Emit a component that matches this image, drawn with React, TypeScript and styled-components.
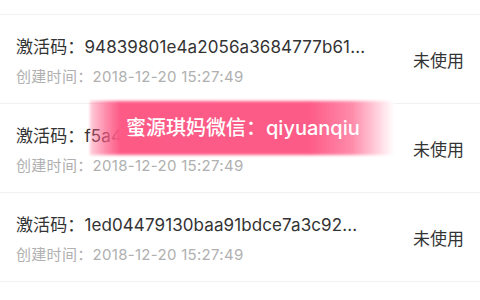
import styled, { createGlobalStyle } from 'styled-components';

const GlobalStyle = createGlobalStyle`
  html, body {
    margin: 0;
    padding: 0;
    background: #ffffff;
  }
  body {
    font-family: Inter, 'Noto Sans CJK SC', sans-serif;
    -webkit-font-smoothing: antialiased;
  }
`;

type Code = {
  id: number;
  code: string;
  createdAt: string;
  status: string;
};

const codes: Code[] = [
  {
    id: 1,
    code: '94839801e4a2056a3684777b61c2d09a',
    createdAt: '2018-12-20 15:27:49',
    status: '未使用',
  },
  {
    id: 2,
    code: 'f5a4c07e21b9d3a86e55f0c1a7b3e2d4',
    createdAt: '2018-12-20 15:27:49',
    status: '未使用',
  },
  {
    id: 3,
    code: '1ed04479130baa91bdce7a3c92f61e08',
    createdAt: '2018-12-20 15:27:49',
    status: '未使用',
  },
];

// 긴 코드는 앞부분만 보여줌
const shorten = (code: string) =>
  code.length > 26 ? `${code.slice(0, 26)}...` : code;

const App = () => {
  return (
    <>
      <GlobalStyle />
      <Page>
        <PrevTail />
        <List>
          {codes.map((item) => (
            <Row key={item.id}>
              <Info>
                <CodeLine>激活码：{shorten(item.code)}</CodeLine>
                <TimeLine>创建时间：{item.createdAt}</TimeLine>
              </Info>
              <Status>{item.status}</Status>
            </Row>
          ))}
          <Row />
        </List>
        <Banner>
          <BannerText>蜜源琪妈微信：qiyuanqiu</BannerText>
        </Banner>
      </Page>
    </>
  );
};

export default App;

// 전체 페이지
const Page = styled.div`
  position: relative;
  width: 480px;
  height: 300px;
  overflow: hidden;
  background: #fff;
`;

// 위쪽 이전 항목 꼬리
const PrevTail = styled.div`
  height: 14px;
`;

const List = styled.div`
  display: flex;
  flex-direction: column;
`;

const Row = styled.div`
  display: flex;
  align-items: center;
  justify-content: space-between;
  height: 89px;
  flex-shrink: 0;
  padding: 0 16px;
  border-top: 1.5px solid #f1f1f1;
  box-sizing: border-box;
`;

const Info = styled.div`
  display: flex;
  flex-direction: column;
  gap: 11px;
  min-width: 0;
  margin-top: 5px;
`;

const CodeLine = styled.div`
  font-size: 17px;
  line-height: 20px;
  letter-spacing: 0.1px;
  color: #333;
  white-space: nowrap;
`;

const TimeLine = styled.div`
  font-size: 15px;
  line-height: 18px;
  letter-spacing: 0.3px;
  color: #b0b0b0;
  white-space: nowrap;
`;

const Status = styled.div`
  font-size: 17px;
  color: #333;
  white-space: nowrap;
`;

// 분홍 워터마크 배너
const Banner = styled.div`
  position: absolute;
  left: 90px;
  top: 101px;
  width: 304px;
  height: 54px;
  display: flex;
  align-items: center;
  padding-left: 36px;
  box-sizing: border-box;

  &::before {
    content: '';
    position: absolute;
    inset: 0;
    background: linear-gradient(
      to right,
      rgba(253, 90, 134, 0.3) 0%,
      rgba(253, 90, 134, 0.75) 6%,
      #fd5a86 10%,
      #fd5b87 72%,
      #fe8aa9 86%,
      #fff 100%
    );
    filter: blur(1.5px);
  }
`;

const BannerText = styled.span`
  position: relative;
  font-size: 20px;
  font-weight: 500;
  color: #fff;
  white-space: nowrap;
  margin-top: -3px;
`;
